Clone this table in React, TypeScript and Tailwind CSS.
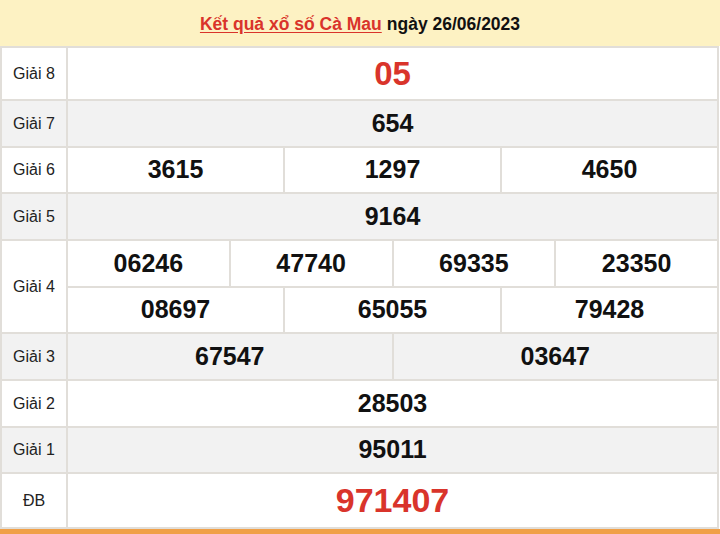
import React from "react";

const B = "border-[#e1ded9]";

function Row({
  label,
  h,
  bg,
  children,
}: {
  label: string;
  h: string;
  bg: string;
  children: React.ReactNode;
}) {
  return (
    <div className={`flex ${h} ${bg} border-b-2 ${B}`}>
      <div className={`w-[66px] shrink-0 flex items-center justify-center border-r-2 ${B} text-[16px] text-[#222]`}>
        {label}
      </div>
      <div className="flex-1 flex flex-col">{children}</div>
    </div>
  );
}

function Cells({ items, cls = "text-[25px]" }: { items: string[]; cls?: string }) {
  return (
    <div className="flex flex-1">
      {items.map((n, i) => (
        <div
          key={i}
          className={`flex-1 flex items-center justify-center font-bold text-[#111] ${cls} ${i > 0 ? `border-l-2 ${B}` : ""}`}
        >
          {n}
        </div>
      ))}
    </div>
  );
}

export default function App() {
  return (
    <div
      className="w-[720px] h-[534px] overflow-hidden bg-white"
      style={{ fontFamily: '"Liberation Sans", Arial, sans-serif' }}
    >
      <div className="h-[46px] pt-[2px] bg-[#fdf2c3] flex items-center justify-center text-[17.5px] font-bold text-[#111]">
        <span className="text-[#d9342b] underline underline-offset-2">Kết quả xổ số Cà Mau</span>
        <span className="ml-[5px]">ngày 26/06/2023</span>
      </div>
      <div className={`border-t-2 border-x-2 ${B} w-[719px]`}>
        <Row label="Giải 8" h="h-[53px]" bg="bg-white">
          <Cells items={["05"]} cls="text-[33px] !text-[#d9342b]" />
        </Row>
        <Row label="Giải 7" h="h-[47px]" bg="bg-[#f2f2f2]">
          <Cells items={["654"]} />
        </Row>
        <Row label="Giải 6" h="h-[46px]" bg="bg-white">
          <Cells items={["3615", "1297", "4650"]} />
        </Row>
        <Row label="Giải 5" h="h-[47px]" bg="bg-[#f2f2f2]">
          <Cells items={["9164"]} />
        </Row>
        <Row label="Giải 4" h="h-[93px]" bg="bg-white">
          <div className={`flex flex-1 border-b-2 ${B}`}>
            <Cells items={["06246", "47740", "69335", "23350"]} />
          </div>
          <Cells items={["08697", "65055", "79428"]} />
        </Row>
        <Row label="Giải 3" h="h-[47px]" bg="bg-[#f2f2f2]">
          <Cells items={["67547", "03647"]} />
        </Row>
        <Row label="Giải 2" h="h-[47px]" bg="bg-white">
          <Cells items={["28503"]} />
        </Row>
        <Row label="Giải 1" h="h-[46px]" bg="bg-[#f2f2f2]">
          <Cells items={["95011"]} />
        </Row>
        <Row label="ĐB" h="h-[55px]" bg="bg-white">
          <Cells items={["971407"]} cls="text-[34px] !text-[#d9342b]" />
        </Row>
      </div>
      <div className="h-[8px] bg-[#f0a048]" />
    </div>
  );
}
